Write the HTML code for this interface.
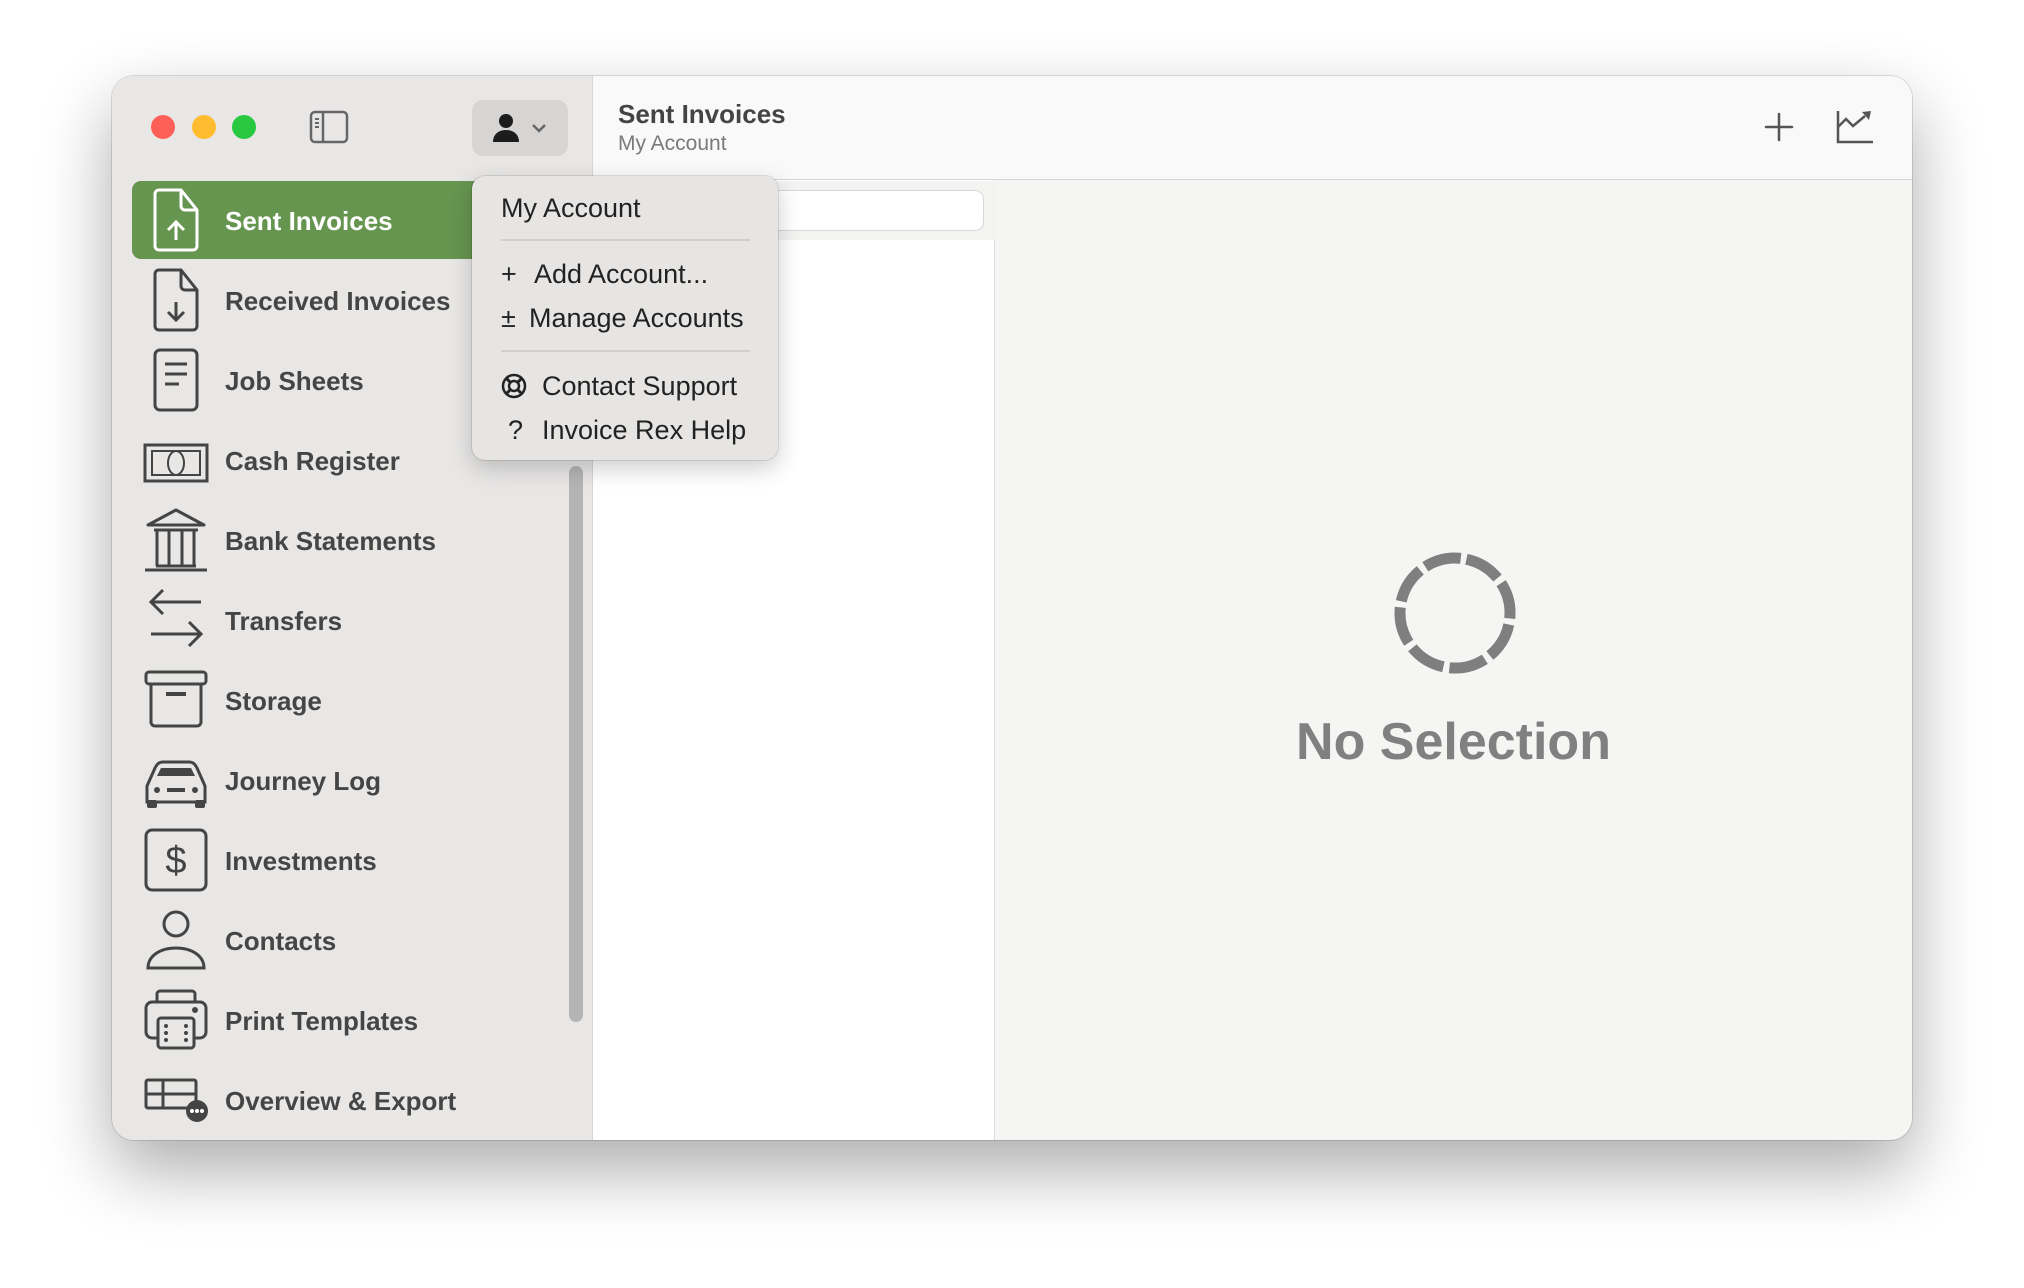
<!DOCTYPE html>
<html><head><meta charset="utf-8">
<style>
*{margin:0;padding:0;box-sizing:border-box}
body{width:2024px;height:1288px;background:#fff;font-family:"Liberation Sans",sans-serif;position:relative;overflow:hidden}
.win{position:absolute;left:112px;top:76px;width:1800px;height:1064px;border-radius:22px;overflow:hidden;background:#f5f5f4;box-shadow:0 30px 70px rgba(0,0,0,.33),0 0 0 1px rgba(0,0,0,.12)}
.side{position:absolute;left:0;top:0;width:481px;height:100%;background:#e8e7e6;border-right:1px solid #d6d6d6}
.tl{position:absolute;top:39px;width:24px;height:24px;border-radius:50%}
.list{position:absolute;left:481px;top:0;width:402px;height:100%;background:#fff;border-right:1px solid #dcdcdc}
.toolbar{position:absolute;left:481px;top:0;right:0;height:104px;background:#faf9fa;border-bottom:1px solid #d4d4d4}
.lhead{position:absolute;left:481px;top:105px;width:402px;height:59px;background:#f3f3f2}
.search{position:absolute;left:496px;top:114px;width:376px;height:41px;background:#fff;border:1px solid #d8d8d8;border-radius:9px}
.title{position:absolute;left:25px;top:23px;font-size:26px;font-weight:bold;color:#444}
.sub{position:absolute;left:25px;top:56px;font-size:21px;color:#7a7a7a}
.row{position:absolute;left:20px;width:453px;height:78px}
.row svg{position:absolute;left:19px;top:7px}
.row svg.w{left:11px}
.row span{position:absolute;left:93px;top:25px;font-size:26px;font-weight:bold;color:#454545}
.sel{background:#669550;border-radius:9px}
.sel span{color:#fff}
.scroll{position:absolute;left:457px;top:390px;width:14px;height:556px;background:#b4b4b4;border-radius:7px}
.menu{position:absolute;left:472px;top:176px;width:306px;height:284px;background:#e6e5e4;border-radius:13px;box-shadow:0 8px 24px rgba(0,0,0,.2),0 0 0 1px rgba(0,0,0,.1)}
.mi{position:absolute;left:29px;font-size:27px;color:#222;white-space:nowrap}
.sep{position:absolute;left:29px;width:249px;height:2px;background:#d0cfce}
.ns{position:absolute;left:883px;width:917px;text-align:center;top:636px;font-size:52px;font-weight:bold;color:#808080}
</style></head><body>
<div class="win">
 <div class="side">
  <div class="tl" style="left:39px;background:#fe5f57"></div>
  <div class="tl" style="left:80px;background:#febc2e"></div>
  <div class="tl" style="left:120px;background:#28c840"></div>
  <svg style="position:absolute;left:197px;top:34px" width="40" height="34" viewBox="0 0 40 34"><rect x="2" y="2" width="36" height="30" rx="4" fill="none" stroke="#666" stroke-width="2.5"/><line x1="14" y1="2" x2="14" y2="32" stroke="#666" stroke-width="2.5"/><path d="M6 9h4M6 13h4M6 17h4" stroke="#666" stroke-width="2"/></svg>
  <div style="position:absolute;left:360px;top:24px;width:96px;height:56px;background:#d6d5d4;border-radius:11px">
   <svg style="position:absolute;left:19px;top:13px" width="30" height="30" viewBox="0 0 30 30"><circle cx="15" cy="8" r="7" fill="#1c1c1c"/><path d="M2 29c0-8 6-12 13-12s13 4 13 12z" fill="#1c1c1c"/></svg>
   <svg style="position:absolute;left:59px;top:22px" width="16" height="12" viewBox="0 0 16 12"><path d="M2 3l6 6 6-6" fill="none" stroke="#666" stroke-width="2.5"/></svg>
  </div>
  <div class="row sel" style="top:105px">
   <svg width="52" height="64" viewBox="0 0 52 64"><path d="M8 2h22l16 20v36a4 4 0 0 1-4 4H8a4 4 0 0 1-4-4V6a4 4 0 0 1 4-4z M30 2v16a4 4 0 0 0 4 4h12" fill="none" stroke="#fff" stroke-width="3"/><path d="M25 52V34M17 42l8-8 8 8" fill="none" stroke="#fff" stroke-width="3"/></svg>
   <span>Sent Invoices</span></div>
  <div class="row" style="top:185px">
   <svg width="52" height="64" viewBox="0 0 52 64"><path d="M8 2h22l16 20v36a4 4 0 0 1-4 4H8a4 4 0 0 1-4-4V6a4 4 0 0 1 4-4z M30 2v16a4 4 0 0 0 4 4h12" fill="none" stroke="#444" stroke-width="3"/><path d="M25 34v18M17 44l8 8 8-8" fill="none" stroke="#444" stroke-width="3"/></svg>
   <span>Received Invoices</span></div>
  <div class="row" style="top:265px">
   <svg width="52" height="64" viewBox="0 0 52 64"><rect x="4" y="2" width="42" height="60" rx="5" fill="none" stroke="#444" stroke-width="3"/><path d="M14 16h22M14 26h22M14 36h14" stroke="#444" stroke-width="3"/></svg>
   <span>Job Sheets</span></div>
  <div class="row" style="top:345px">
   <svg class="w" width="66" height="64" viewBox="0 0 66 64"><rect x="2" y="17" width="62" height="36" fill="none" stroke="#444" stroke-width="3"/><rect x="9" y="23" width="48" height="24" fill="none" stroke="#444" stroke-width="2"/><ellipse cx="33" cy="35" rx="8" ry="12" fill="none" stroke="#444" stroke-width="2"/></svg>
   <span>Cash Register</span></div>
  <div class="row" style="top:425px">
   <svg class="w" width="66" height="64" viewBox="0 0 66 64"><path d="M5 17L33 2l28 15z" fill="none" stroke="#444" stroke-width="3" stroke-linejoin="round"/><path d="M11 22h44M13 58h40M14 22v36M26 22v36M39 22v36M51 22v36" stroke="#444" stroke-width="3"/><path d="M2 62h62" stroke="#444" stroke-width="3"/></svg>
   <span>Bank Statements</span></div>
  <div class="row" style="top:505px">
   <svg class="w" width="66" height="64" viewBox="0 0 66 64"><path d="M58 14H8M20 2L8 14l12 12M8 46h50M46 34l12 12-12 12" fill="none" stroke="#444" stroke-width="3"/></svg>
   <span>Transfers</span></div>
  <div class="row" style="top:585px">
   <svg class="w" width="66" height="64" viewBox="0 0 66 64"><rect x="3" y="4" width="60" height="12" rx="3" fill="none" stroke="#444" stroke-width="3"/><path d="M8 16v38a4 4 0 0 0 4 4h42a4 4 0 0 0 4-4V16" fill="none" stroke="#444" stroke-width="3"/><path d="M23 26h20" stroke="#444" stroke-width="4"/></svg>
   <span>Storage</span></div>
  <div class="row" style="top:665px">
   <svg class="w" width="66" height="64" viewBox="0 0 66 64"><path d="M4 54V38l8-18c2-4 4-6 8-6h26c4 0 6 2 8 6l8 18v16z" fill="none" stroke="#444" stroke-width="3"/><path d="M14 28l4-8h30l4 8z" fill="#444"/><circle cx="14" cy="42" r="3" fill="#444"/><circle cx="52" cy="42" r="3" fill="#444"/><path d="M24 42h18" stroke="#444" stroke-width="4"/><rect x="4" y="52" width="10" height="8" rx="2" fill="#444"/><rect x="52" y="52" width="10" height="8" rx="2" fill="#444"/></svg>
   <span>Journey Log</span></div>
  <div class="row" style="top:745px">
   <svg class="w" width="66" height="64" viewBox="0 0 66 64"><rect x="3" y="2" width="60" height="60" rx="6" fill="none" stroke="#444" stroke-width="3"/><text x="33" y="45" text-anchor="middle" font-family="Liberation Sans" font-size="38" fill="#444">$</text></svg>
   <span>Investments</span></div>
  <div class="row" style="top:825px">
   <svg class="w" width="66" height="64" viewBox="0 0 66 64"><circle cx="33" cy="16" r="12" fill="none" stroke="#444" stroke-width="3"/><path d="M5 60c0-12 12-20 28-20s28 8 28 20z" fill="none" stroke="#444" stroke-width="3"/></svg>
   <span>Contacts</span></div>
  <div class="row" style="top:905px">
   <svg class="w" width="66" height="64" viewBox="0 0 66 64"><path d="M14 14V6a3 3 0 0 1 3-3h32a3 3 0 0 1 3 3v8" fill="none" stroke="#444" stroke-width="3"/><rect x="3" y="14" width="60" height="36" rx="6" fill="none" stroke="#444" stroke-width="3"/><circle cx="52" cy="22" r="3" fill="#444"/><rect x="15" y="30" width="36" height="30" rx="3" fill="#e8e7e6" stroke="#444" stroke-width="3"/><g fill="#444"><circle cx="23" cy="38" r="2"/><circle cx="23" cy="45" r="2"/><circle cx="23" cy="52" r="2"/><circle cx="43" cy="38" r="2"/><circle cx="43" cy="45" r="2"/><circle cx="43" cy="52" r="2"/></g></svg>
   <span>Print Templates</span></div>
  <div class="row" style="top:985px">
   <svg class="w" width="66" height="64" viewBox="0 0 66 64"><path d="M3 26h50M20 12v28" fill="none" stroke="#444" stroke-width="3"/><rect x="3" y="12" width="50" height="28" rx="2" fill="none" stroke="#444" stroke-width="3"/><circle cx="54" cy="43" r="11" fill="#444"/><g fill="#fff"><circle cx="49" cy="43" r="2"/><circle cx="54" cy="43" r="2"/><circle cx="59" cy="43" r="2"/></g></svg>
   <span>Overview &amp; Export</span></div>
  <div class="scroll"></div>
 </div>
 <div class="list"></div>
 <div class="lhead"></div>
 <div class="search"></div>
 <div class="toolbar">
  <div class="title">Sent Invoices</div>
  <div class="sub">My Account</div>
  <svg style="position:absolute;left:1170px;top:35px" width="32" height="32" viewBox="0 0 32 32"><path d="M16 3v26M3 16h26" stroke="#555" stroke-width="2.5" stroke-linecap="round"/></svg>
  <svg style="position:absolute;left:1242px;top:33px" width="40" height="36" viewBox="0 0 40 36"><path d="M3 2v31h35" fill="none" stroke="#555" stroke-width="2.5"/><path d="M3 18l8-8 7 7 12-10" fill="none" stroke="#555" stroke-width="2.5"/><path d="M27 3l9-1-2 9z" fill="#555"/></svg>
 </div>
 <svg style="position:absolute;left:1281px;top:475px" width="124" height="124" viewBox="0 0 124 124"><circle cx="62" cy="62" r="55" fill="none" stroke="#7f7f7f" stroke-width="11" stroke-dasharray="37 6.2" transform="rotate(-78 62 62)"/></svg>
 <div class="ns">No Selection</div>
</div>
<div class="menu">
 <div class="mi" style="top:17px">My Account</div>
 <div class="sep" style="top:63px"></div>
 <div class="mi" style="top:83px">+</div>
 <div class="mi" style="top:83px;left:62px">Add Account...</div>
 <div class="mi" style="top:127px">±</div>
 <div class="mi" style="top:127px;left:57px">Manage Accounts</div>
 <div class="sep" style="top:174px"></div>
 <svg style="position:absolute;left:29px;top:197px" width="26" height="26" viewBox="0 0 26 26"><circle cx="13" cy="13" r="11" fill="none" stroke="#222" stroke-width="2.5"/><circle cx="13" cy="13" r="5" fill="none" stroke="#222" stroke-width="2.5"/><path d="M5 5l4 4M21 5l-4 4M5 21l4-4M21 21l-4-4" stroke="#222" stroke-width="3"/></svg>
 <div class="mi" style="top:195px;left:70px">Contact Support</div>
 <div class="mi" style="top:239px;left:36px">?</div>
 <div class="mi" style="top:239px;left:70px">Invoice Rex Help</div>
</div>
</body></html>
